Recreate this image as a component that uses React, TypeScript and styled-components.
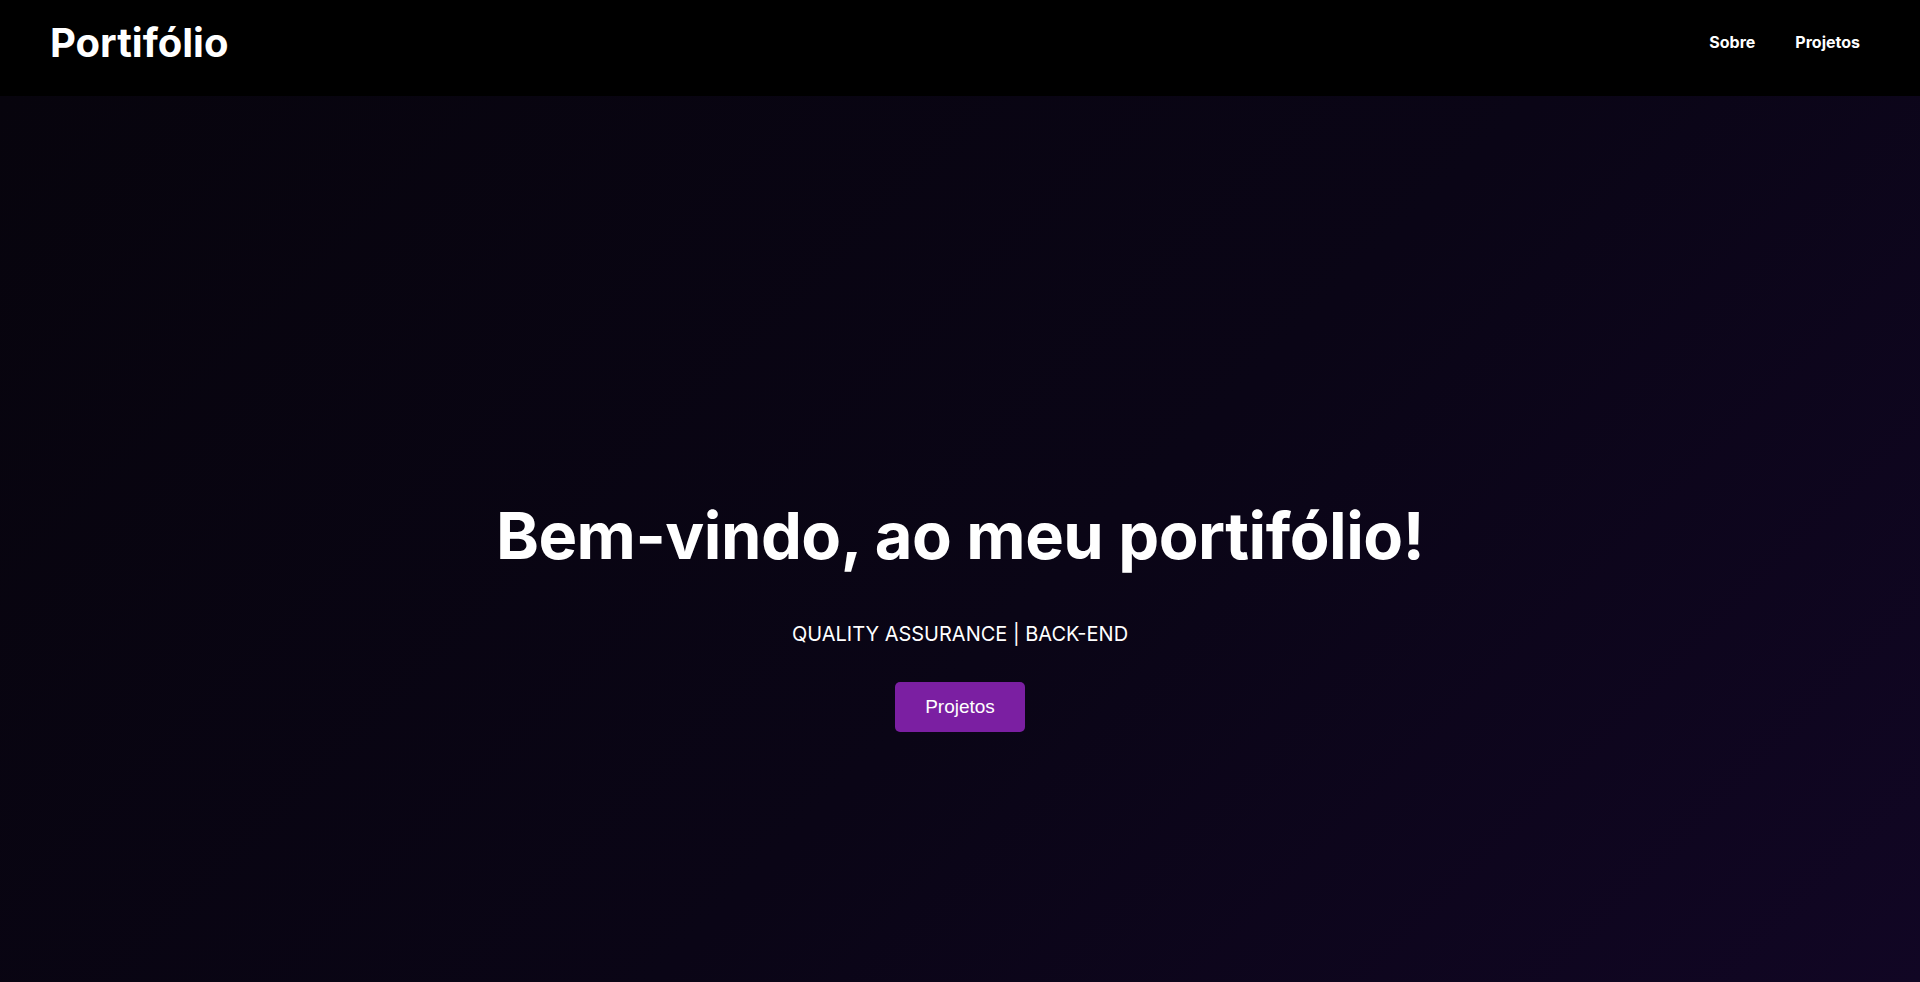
import React from "react";
import styled, { createGlobalStyle } from "styled-components";

const GlobalStyle = createGlobalStyle`
  * { box-sizing: border-box; }
  html, body { margin: 0; padding: 0; background: #000; }
  body { font-family: "Inter", "Open Sans", sans-serif; color: #fff; }
`;

const Page = styled.div`
  min-height: 982px;
  display: flex;
  flex-direction: column;
`;

const Header = styled.header`
  height: 96px;
  background: #000;
  display: flex;
  align-items: center;
  justify-content: space-between;
  padding: 0 60px 0 50px;
`;

const Logo = styled.h1`
  margin: 0;
  font-family: "Inter", sans-serif;
  font-weight: 700;
  font-size: 40px;
  line-height: 48px;
  letter-spacing: 0px;
  color: #fff;
  padding-bottom: 10px;
`;

const Nav = styled.nav`
  display: flex;
  gap: 40px;
  padding-bottom: 12px;
`;

const NavLink = styled.a`
  font-family: "Inter", sans-serif;
  font-weight: 700;
  font-size: 16px;
  color: #fff;
  text-decoration: none;
`;

const Hero = styled.main`
  flex: 1;
  background: linear-gradient(135deg, #07040d 0%, #0a0516 55%, #110624 100%);
  display: flex;
  flex-direction: column;
  align-items: center;
  padding-top: 397px;
`;

const Title = styled.h2`
  margin: 0;
  font-family: "Inter", sans-serif;
  font-weight: 700;
  font-size: 65px;
  line-height: 86px;
  letter-spacing: -0.5px;
  color: #fff;
`;

const Subtitle = styled.p`
  margin: 43px 0 0;
  font-family: "Inter", sans-serif;
  font-weight: 400;
  font-size: 20px;
  line-height: 24px;
  color: #fff;
`;

const Button = styled.button`
  margin-top: 36px;
  width: 130px;
  height: 50px;
  border: none;
  border-radius: 5px;
  background: #7b1fa2;
  color: #fff;
  font-family: "Liberation Sans", Arial, sans-serif;
  font-size: 19px;
  cursor: pointer;
`;

export default function App() {
  return (
    <Page>
      <GlobalStyle />
      <Header>
        <Logo>Portifólio</Logo>
        <Nav>
          <NavLink href="#sobre">Sobre</NavLink>
          <NavLink href="#projetos">Projetos</NavLink>
        </Nav>
      </Header>
      <Hero>
        <Title>Bem-vindo, ao meu portifólio!</Title>
        <Subtitle>QUALITY ASSURANCE | BACK-END</Subtitle>
        <Button>Projetos</Button>
      </Hero>
    </Page>
  );
}
